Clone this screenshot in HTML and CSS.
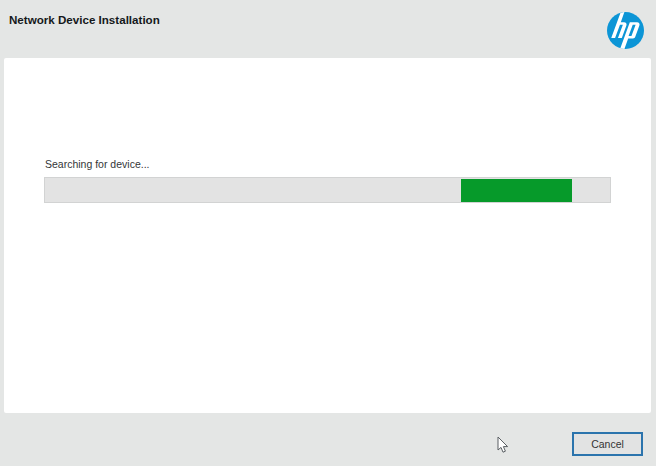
FILE: index.html
```html
<!DOCTYPE html>
<html lang="en">
<head>
    <meta charset="UTF-8">
    <meta name="viewport" content="width=device-width, initial-scale=1.0">
    <title>Network Device Installation</title>
    <link rel="stylesheet" href="styles.css">
</head>
<body>
    <div class="window">
        <!-- Header -->
        <div class="header">
            <h1 class="title">Network Device Installation</h1>
            <svg class="logo" viewBox="0 0 24 24" aria-label="HP">
                <circle cx="12" cy="12" r="12" fill="#0c95d6"/>
                <path fill="#fff" d="M8.75.45 11.28.06 8.95 6.6h2.1c1.27 0 1.96.98 1.52 2.18L9.6 16.92H7.11l3.18-8.73H8.42l-3.18 8.73H2.75Z"/>
                <path fill="#fff" fill-rule="evenodd" d="M14.8 6.6h4.68c1.27 0 1.96.98 1.52 2.18l-2.66 7.32c-.2.56-.85 1.14-1.44 1.14h-3.16L11.28 24l-2.64-.5ZM16.7 8.19l-2.7 7.41h1.87l2.7-7.41Z"/>
            </svg>
        </div>

        <!-- Main panel -->
        <div class="panel">
            <p class="status">Searching for device...</p>
            <div class="progress">
                <div class="progress-fill"></div>
            </div>
        </div>

        <!-- Footer -->
        <div class="footer">
            <button class="cancel">Cancel</button>
        </div>
    </div>

    <svg class="cursor" viewBox="0 0 12 18">
        <path fill="#fff" stroke="#5a5f63" stroke-width="1" stroke-linejoin="round" d="M1 1v13l3-2.6 2 4.8 2.4-1-2-4.6h4.2Z"/>
    </svg>
</body>
</html>
```

FILE: styles.css
```css
body {
    font-family: "Liberation Sans", Arial, sans-serif;
    margin: 0;
    padding: 0;
    background-color: #e4e6e5;
    color: #222;
}

.window {
    width: 656px;
    height: 466px;
    display: flex;
    flex-direction: column;
    overflow: hidden;
}

.header {
    height: 58px;
    display: flex;
    justify-content: space-between;
    align-items: flex-start;
    padding: 0 12px 0 9px;
    flex-shrink: 0;
}

.title {
    margin: 13px 0 0;
    font-size: 11.6px;
    line-height: 13px;
    font-weight: bold;
    color: #15181a;
}

.logo {
    width: 37px;
    height: 37px;
    margin-top: 12px;
}

.panel {
    height: 355px;
    margin: 0 5px 0 4px;
    padding: 100px 40px 0 40px;
    box-sizing: border-box;
    background-color: #fff;
    border-radius: 2px;
    flex-shrink: 0;
}

.status {
    margin: 0 0 6px 1px;
    font-size: 10.5px;
    line-height: 13px;
    color: #333638;
}

.progress {
    height: 26px;
    box-sizing: border-box;
    padding: 1px 38px 0 416px;
    background-color: #e3e3e3;
    border: 1px solid #d2d3d3;
}

.progress-fill {
    height: 100%;
    background-color: #069a2a;
}

.footer {
    flex: 1;
    display: flex;
    justify-content: flex-end;
    align-items: flex-start;
    padding: 19px 13px 0 0;
}

.cancel {
    width: 71px;
    height: 24px;
    padding: 0;
    background-color: #e2e3e3;
    border: 2px solid #2b74ad;
    font-family: inherit;
    font-size: 10.5px;
    color: #333;
    cursor: pointer;
}

.cursor {
    position: absolute;
    left: 497px;
    top: 436px;
    width: 12px;
    height: 18px;
}
```
